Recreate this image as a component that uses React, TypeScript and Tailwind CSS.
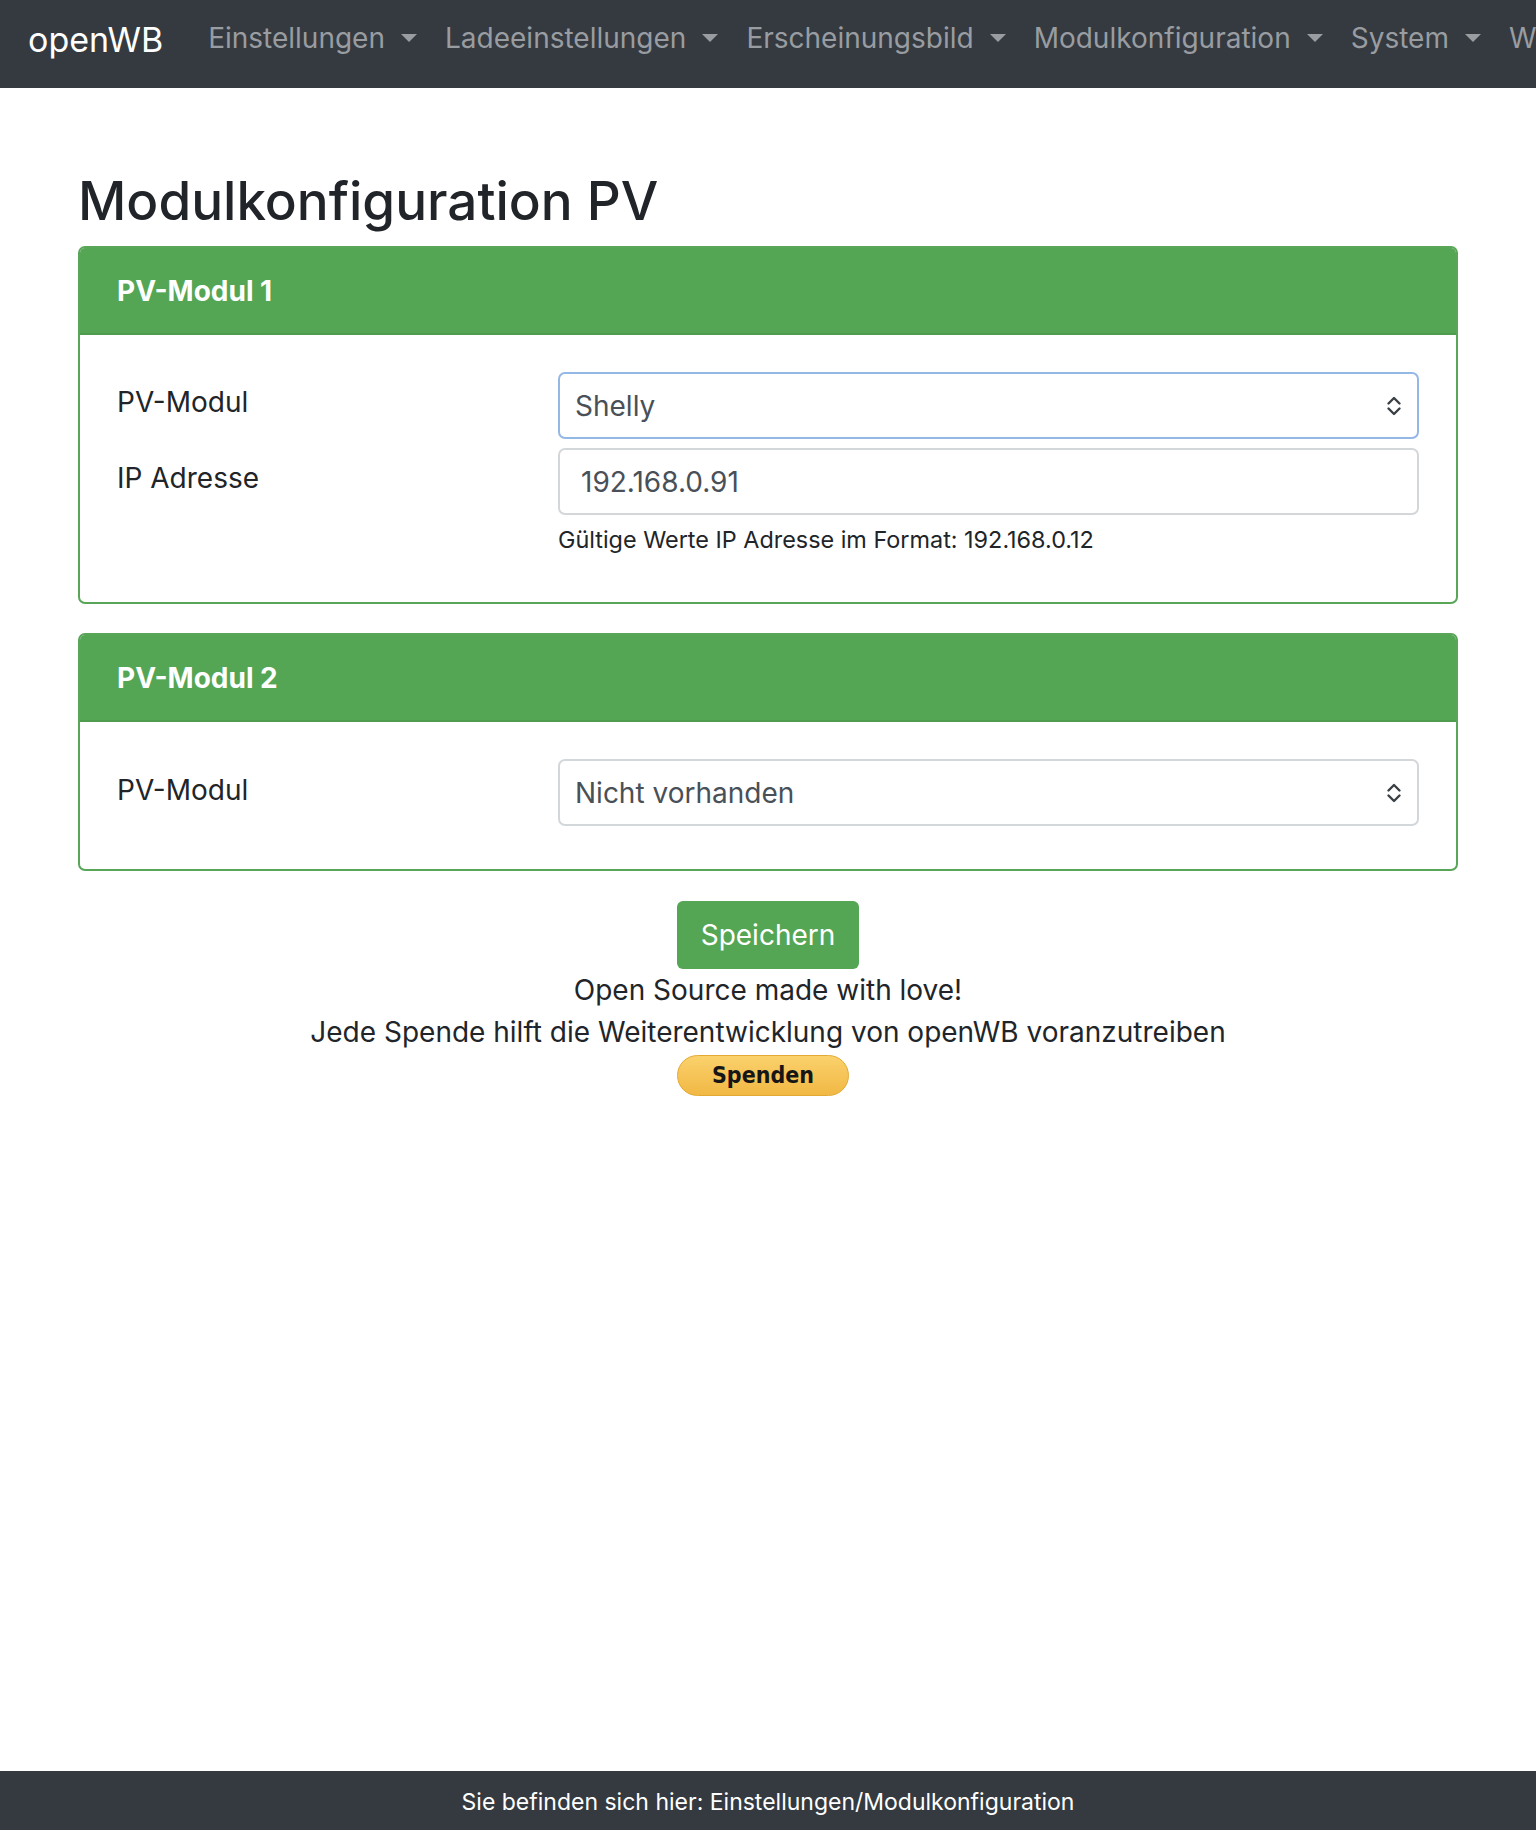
import React from 'react';

const navItems = ['Einstellungen', 'Ladeeinstellungen', 'Erscheinungsbild', 'Modulkonfiguration', 'System', 'Wartung'];

// Doppel-Chevron wie beim Safari-Select
const SelectArrows = () => (
  <svg width="16" height="22" viewBox="0 0 16 22" fill="none" stroke="#3b4045" strokeWidth="2.4" strokeLinecap="round" strokeLinejoin="round">
    <path d="M2.5 8.5 L8 3 L13.5 8.5" />
    <path d="M2.5 13.5 L8 19 L13.5 13.5" />
  </svg>
);

const SelectBox = ({ value, focused = false }: { value: string; focused?: boolean }) => (
  <div
    className={`h-[67px] flex items-center justify-between pl-[15px] pr-[15px] rounded-[7px] border-2 bg-white text-[28px] text-[#495057] ${
      focused ? 'border-[#94b8e6]' : 'border-[#d4d7da]'
    }`}
  >
    <span>{value}</span>
    <SelectArrows />
  </div>
);

const Card = ({ title, children }: { title: string; children: React.ReactNode }) => (
  <div className="border-2 border-[#59a659] rounded-[7px] overflow-hidden">
    <div className="h-[87px] bg-[#54a654] border-b-2 border-[#4f9c4f] flex items-center px-[37px]">
      <span className="text-white text-[28px] font-bold">{title}</span>
    </div>
    {children}
  </div>
);

export default function App() {
  return (
    <div className="min-h-[1830px] flex flex-col bg-white font-['Inter',sans-serif] text-[#212529]">
      {/* Navbar */}
      <nav className="h-[88px] shrink-0 bg-[#343a40] flex items-center pb-[12px] pl-[28px] overflow-hidden whitespace-nowrap">
        <span className="text-white text-[34px] mr-[31px] mt-[3px]">openWB</span>
        {navItems.map((item) => (
          <div key={item} className="flex items-center px-[14px] text-[28px] text-[#999ca0]">
            <span>{item}</span>
            <span className="ml-[16px] w-0 h-0 border-l-[8px] border-r-[8px] border-t-[8px] border-l-transparent border-r-transparent border-t-[#999ca0]" />
          </div>
        ))}
      </nav>

      {/* Inhalt */}
      <main className="w-[1380px] mx-auto pt-[81px]">
        <h1 className="text-[53px] leading-[65px] font-medium mb-[12px]">Modulkonfiguration PV</h1>

        <Card title="PV-Modul 1">
          <div className="px-[37px] pt-[37px] pb-[46px]">
            <div className="grid grid-cols-[441px_1fr] items-center">
              <label className="text-[28px] pb-[7px]">PV-Modul</label>
              <SelectBox value="Shelly" focused />
            </div>
            <div className="grid grid-cols-[441px_1fr] mt-[9px]">
              <label className="text-[28px] h-[67px] pb-[7px] flex items-center">IP Adresse</label>
              <div>
                <div className="h-[67px] flex items-center px-[21px] rounded-[7px] border-2 border-[#d4d7da] text-[28px] text-[#495057]">
                  192.168.0.91
                </div>
                <p className="mt-[9px] text-[23.4px] leading-[32px]">Gültige Werte IP Adresse im Format: 192.168.0.12</p>
              </div>
            </div>
          </div>
        </Card>

        <div className="mt-[29px]">
          <Card title="PV-Modul 2">
            <div className="px-[37px] pt-[37px] pb-[43px]">
              <div className="grid grid-cols-[441px_1fr] items-center">
                <label className="text-[28px] pb-[5px]">PV-Modul</label>
                <SelectBox value="Nicht vorhanden" />
              </div>
            </div>
          </Card>
        </div>

        <div className="flex flex-col items-center mt-[30px]">
          <button className="w-[182px] h-[68px] rounded-[6px] bg-[#54a654] text-white text-[28px]">Speichern</button>
          <p className="text-[28px] leading-[42px]">Open Source made with love!</p>
          <p className="text-[28px] leading-[42px]">Jede Spende hilft die Weiterentwicklung von openWB voranzutreiben</p>
          <div className="mt-[2px] mr-[10px] w-[172px] h-[41px] rounded-full bg-gradient-to-b from-[#fad26c] via-[#f6c458] to-[#f1b944] border border-[#e2a935] flex items-center justify-center">
            <span className="font-['DejaVu_Sans_Condensed','DejaVu_Sans',sans-serif] font-bold text-[23px] text-[#161616]">Spenden</span>
          </div>
        </div>
      </main>

      {/* Footer */}
      <footer className="mt-auto h-[59px] bg-[#343a40] flex items-center justify-center">
        <span className="text-[23px] text-white pt-[3px]">Sie befinden sich hier: Einstellungen/Modulkonfiguration</span>
      </footer>
    </div>
  );
}
